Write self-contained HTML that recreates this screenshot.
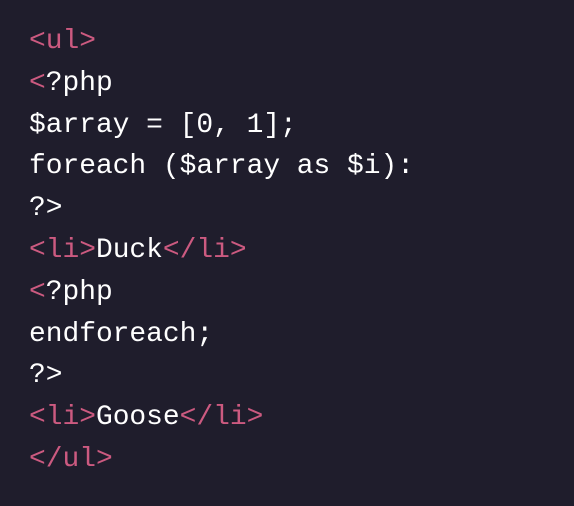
<!DOCTYPE html>
<html><head><style>
html,body{margin:0;padding:0;background:#1f1d2c;width:574px;height:506px;overflow:hidden}
pre{margin:0;position:absolute;left:29px;top:21px;font-family:"Liberation Mono",monospace;font-size:27.9px;line-height:41.8px;color:#ffffff}
.p{color:#cc5a80}
</style></head><body>
<pre><span class="p">&lt;ul&gt;</span>
<span class="p">&lt;</span>?php
$array = [0, 1];
foreach ($array as $i):
?&gt;
<span class="p">&lt;li&gt;</span>Duck<span class="p">&lt;/li&gt;</span>
<span class="p">&lt;</span>?php
endforeach;
?&gt;
<span class="p">&lt;li&gt;</span>Goose<span class="p">&lt;/li&gt;</span>
<span class="p">&lt;/ul&gt;</span></pre>
</body></html>
